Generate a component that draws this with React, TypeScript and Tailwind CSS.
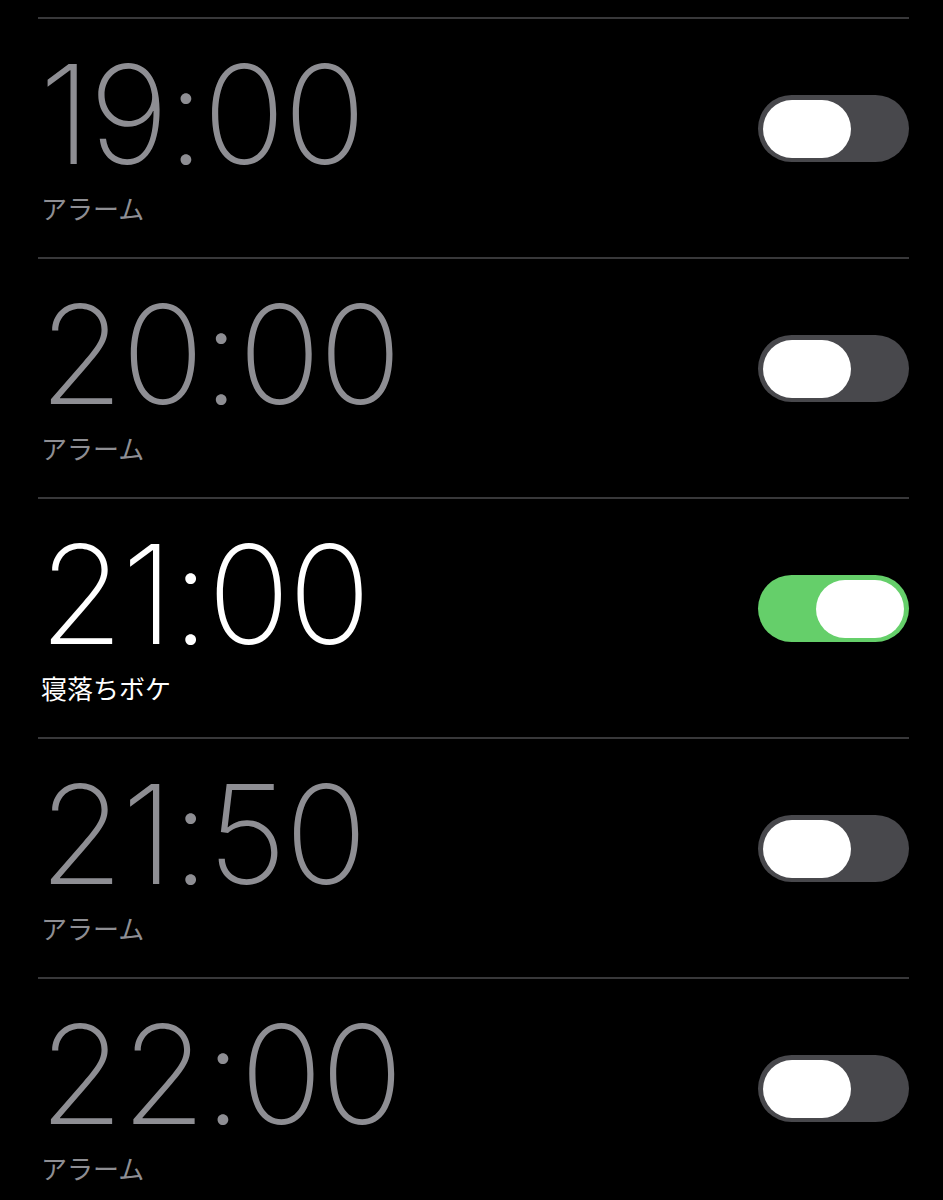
const ALARMS = [
  { time: '19:00', label: 'アラーム', on: false },
  { time: '20:00', label: 'アラーム', on: false },
  { time: '21:00', label: '寝落ちボケ', on: true },
  { time: '21:50', label: 'アラーム', on: false },
  { time: '22:00', label: 'アラーム', on: false },
];

function Toggle({ on }: { on: boolean }) {
  return (
    <div
      className={`flex h-[67px] w-[151px] items-center rounded-full px-[5px] ${
        on ? 'justify-end bg-[#65cf6a]' : 'justify-start bg-[#48484c]'
      }`}
    >
      <div className="h-[58px] w-[88px] rounded-full bg-white" />
    </div>
  );
}

export default function App() {
  return (
    <div className="min-h-[1200px] w-full overflow-hidden bg-black pt-[17px]">
      {ALARMS.map((alarm) => (
        <div key={alarm.time} className="ml-[38px] mr-[34px] flex h-[240px] border-t-2 border-[#38383a]">
          <div className="flex-1 pl-[1px]">
            <div
              className={`mt-[27px] text-[137px] font-extralight leading-none tracking-[-2px] ${
                alarm.on ? 'text-white' : 'text-[#8e8e93]'
              }`}
              style={{ fontFamily: 'Inter, "Noto Sans", sans-serif' }}
            >
              {alarm.time}
            </div>
            <div
              className={`mt-[12px] pl-[2px] text-[26px] leading-none ${alarm.on ? 'text-white' : 'text-[#8e8e93]'}`}
              style={{ fontFamily: '"Noto Sans CJK JP", "Noto Sans", sans-serif' }}
            >
              {alarm.label}
            </div>
          </div>
          <div className="mt-[76px]">
            <Toggle on={alarm.on} />
          </div>
        </div>
      ))}
    </div>
  );
}
